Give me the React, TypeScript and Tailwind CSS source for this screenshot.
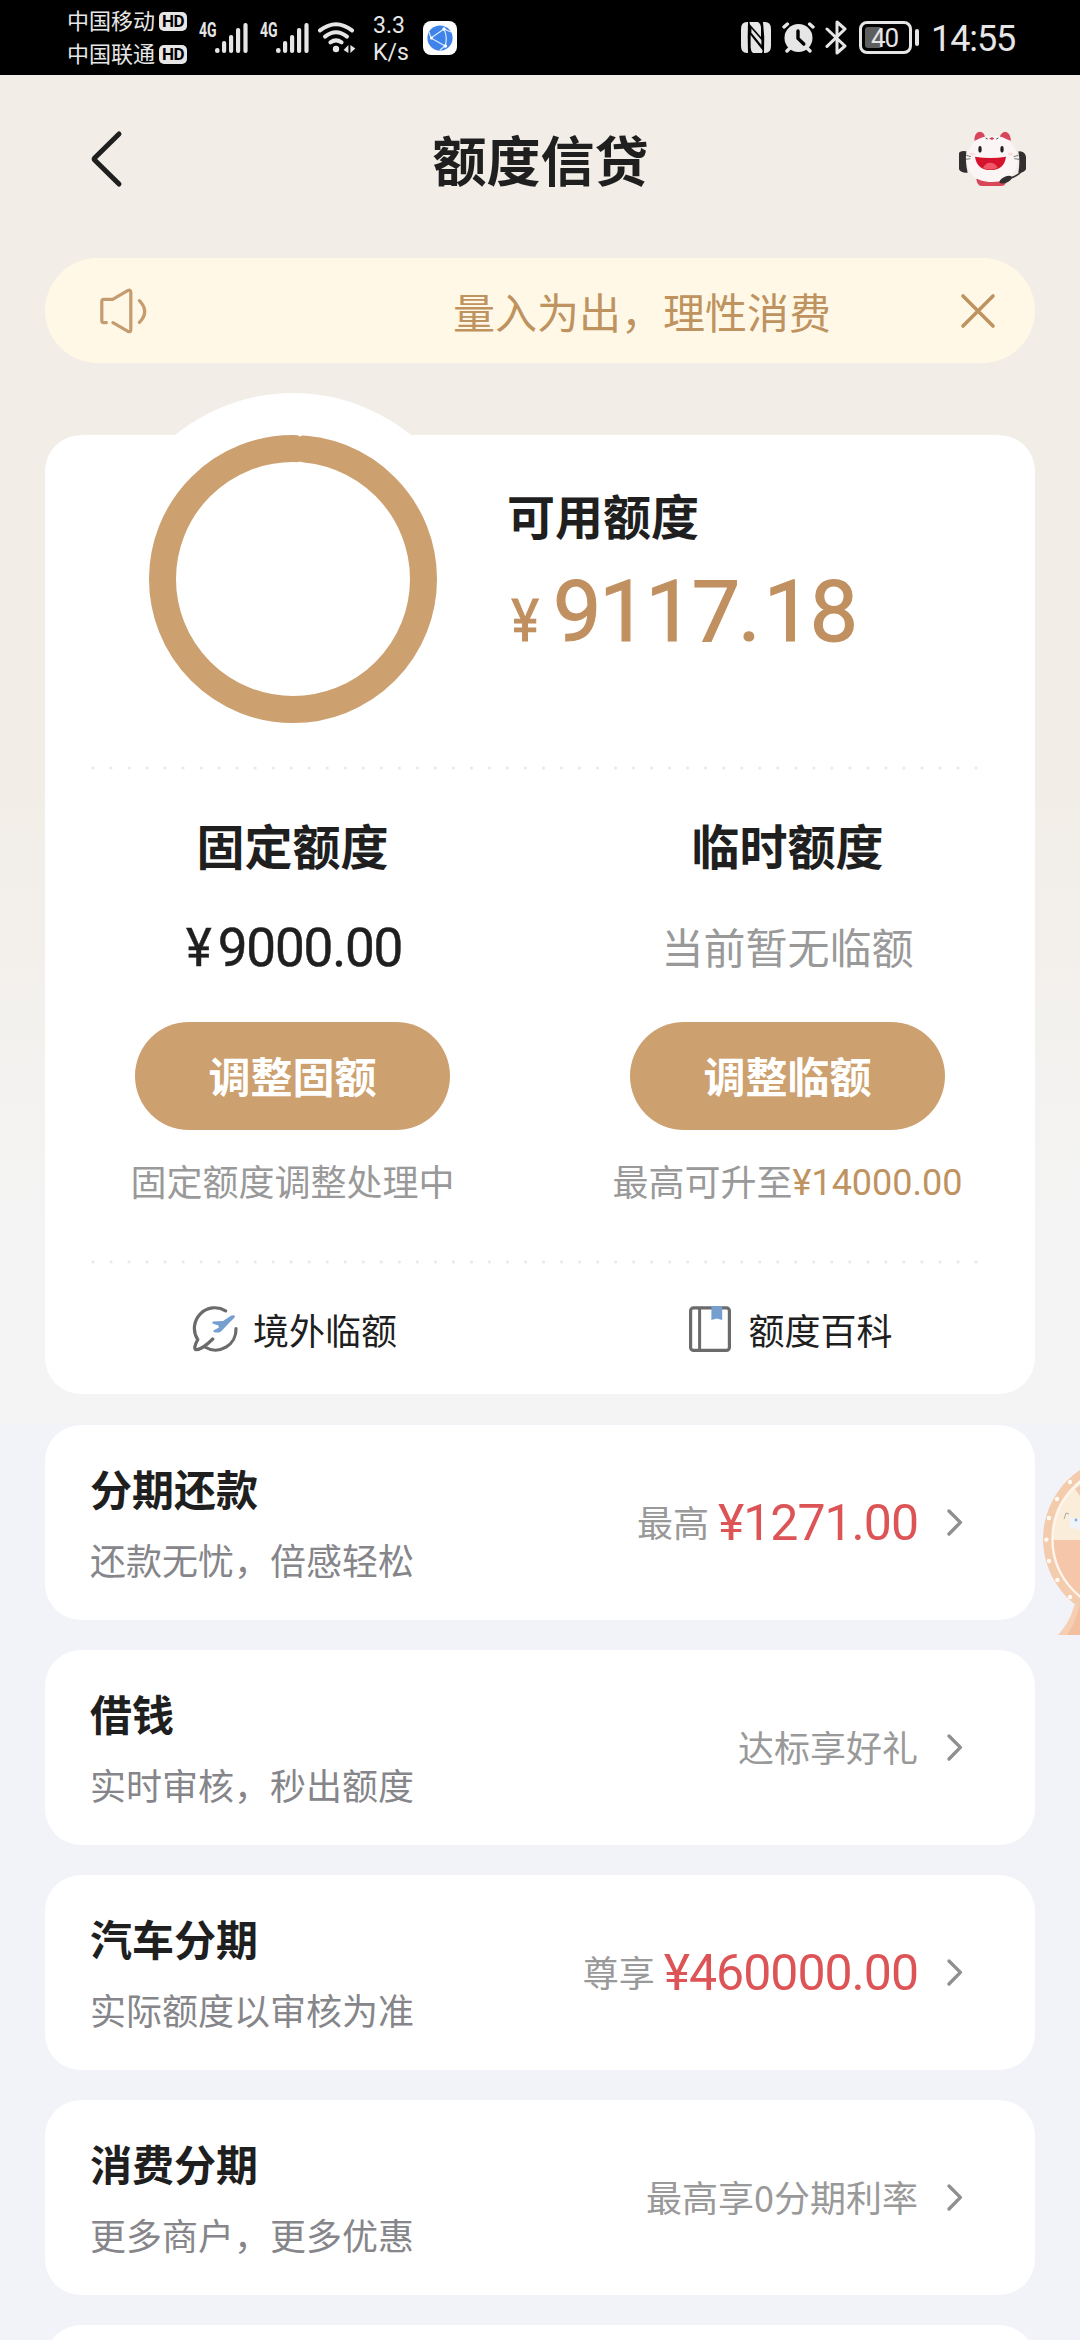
import React from 'react';
import { clsx } from 'clsx';

interface ProductItem {
    id: string;
    title: string;
    desc: string;
    hint: string;
    amount?: string;
}

const PRODUCTS: ProductItem[] = [
    { id: 'repay', title: '分期还款', desc: '还款无忧，倍感轻松', hint: '最高', amount: '¥1271.00' },
    { id: 'loan', title: '借钱', desc: '实时审核，秒出额度', hint: '达标享好礼' },
    { id: 'car', title: '汽车分期', desc: '实际额度以审核为准', hint: '尊享', amount: '¥460000.00' },
    { id: 'consume', title: '消费分期', desc: '更多商户，更多优惠', hint: '最高享0分期利率' },
];

const NUM = "font-['Roboto','Noto_Sans_CJK_SC',sans-serif]";

/* ---------- Status bar ---------- */

const HdBadge = () => (
    <span className="flex h-[19px] w-[28px] items-center justify-center rounded-[5px] bg-[#e6e6e6] font-['Roboto',sans-serif] text-[17px] leading-none font-bold tracking-[-0.5px] text-black">
        HD
    </span>
);

const Carrier = ({ name }: { name: string }) => (
    <div className="flex items-center gap-[4px]">
        <span className="w-[88px] pb-[3px] leading-[21px] whitespace-nowrap">{name}</span>
        <HdBadge />
    </div>
);

const Signal = ({ className }: { className?: string }) => (
    <div className={clsx('flex h-[30px] items-start', className)}>
        <span className="w-[16px] origin-left scale-x-[0.7] font-['Roboto',sans-serif] text-[20px] leading-[15px] font-bold">4G</span>
        <svg width="33" height="30" viewBox="0 0 33 30" fill="#e6e6e6">
            <rect x="0" y="25" width="4.6" height="5" rx="2.2" />
            <rect x="7" y="18" width="4.2" height="12" rx="2" />
            <rect x="14" y="12" width="4.2" height="18" rx="2" />
            <rect x="21" y="5" width="4.2" height="25" rx="2" />
            <rect x="28.4" y="0" width="4.2" height="30" rx="2" />
        </svg>
    </div>
);

const WifiIcon = () => (
    <svg width="38" height="31" viewBox="0 0 38 31" fill="none" stroke="#e6e6e6" strokeWidth="4" strokeLinecap="round">
        <path d="M2 8.4 Q18 -4 34 8.4" />
        <path d="M7 14.6 Q18 6 29 14.6" />
        <path d="M12.4 20.4 Q18 16.4 23.6 20.4" />
        <circle cx="18" cy="27" r="3.2" fill="#e6e6e6" stroke="none" />
        <path d="M30.4 23 V31 L25.6 28 Z M32.4 31 V23 L37.4 26.4 Z" fill="#e6e6e6" stroke="none" />
    </svg>
);

const GlobeAppIcon = () => (
    <svg width="34" height="34" viewBox="0 0 34 34">
        <rect width="34" height="34" rx="8" fill="#fdfdfd" />
        <circle cx="17" cy="17" r="12.6" fill="#3f83ea" />
        <path d="M8 17 L21 8 M8 17 L22 25 M21 8 Q25 17 22 25 M21 8 L28 11 M22 25 L17 29 M8 17 L6 11" stroke="#dcebff" strokeWidth="1.2" fill="none" />
        <g fill="#fff">
            <circle cx="8.4" cy="17" r="1.5" />
            <circle cx="21" cy="8" r="1.7" />
            <circle cx="22.4" cy="25" r="1.7" />
        </g>
    </svg>
);

const StatusBar = () => (
    <div className="flex h-[75px] items-center bg-black pr-[64px] pl-[67px] text-[#e6e6e6]">
        <div className="flex flex-col gap-[9px] font-['Noto_Sans_CJK_SC',sans-serif] text-[22px]">
            <Carrier name="中国移动" />
            <Carrier name="中国联通" />
        </div>
        <Signal className="ml-[12px]" />
        <Signal className="mr-[9px] ml-[12px]" />
        <WifiIcon />
        <div className="ml-[17px] w-[50px] pt-[3px] font-['Roboto',sans-serif] text-[23px] leading-[27px]">
            <div>3.3</div>
            <div>K/s</div>
        </div>
        <GlobeAppIcon />
        <div className="ml-auto flex items-center">
            {/* NFC */}
            <svg width="30" height="31" viewBox="0 0 30 31">
                <path d="M6 0 H7 Q6.4 15 7 31 H6 Q0 31 0 24 V7 Q0 0 6 0 Z" fill="#e6e6e6" />
                <path d="M8.4 0 H17 Q20 2 20 6 V15 L9 2.4 Z" fill="#e6e6e6" />
                <path d="M9.6 13 L21.4 28 Q22 29 21 31 H12 Q9.6 29 9.6 25 Z" fill="#e6e6e6" />
                <path d="M10.4 6.6 L20.4 18 V23 L10.4 10.8 Z" fill="#e6e6e6" />
                <path d="M22 0 H24 Q30 0 30 7 V24 Q30 31 24 31 H23 Q24 15 22 0 Z" fill="#e6e6e6" />
            </svg>
            {/* Alarm */}
            <svg className="ml-[11px]" width="33" height="31" viewBox="0 0 33 31">
                <circle cx="16.5" cy="16" r="14" fill="#e6e6e6" />
                <path d="M2 5 L5.4 2 M31 5 L27.6 2 M5 29 L8 26 M28 29 L25 26" stroke="#e6e6e6" strokeWidth="3.4" strokeLinecap="round" />
                <path d="M16 9 V16.4 L21.8 22" fill="none" stroke="#000" strokeWidth="3.4" strokeLinecap="round" />
            </svg>
            {/* Bluetooth */}
            <svg className="ml-[10px]" width="23" height="35" viewBox="0 0 23 35" fill="none" stroke="#e6e6e6" strokeWidth="3" strokeLinejoin="round" strokeLinecap="round">
                <path d="M2 9 L20 26 L12 33 V2 L20 9 L2 26.4" />
            </svg>
            <div className="ml-[11px] flex h-[33px] w-[53px] items-center rounded-[8px] border-[3px] border-[#e6e6e6] p-[3px]">
                <div className="h-[21px] w-[17px] rounded-[3px] bg-[#5e5e5e]" />
                <span className="-ml-[11px] font-['Roboto',sans-serif] text-[26px] leading-none tracking-[-1px]">40</span>
            </div>
            <div className="ml-[3px] h-[17px] w-[4px] rounded-[2px] bg-[#e6e6e6]" />
            <span className="ml-[12px] w-[85px] pt-[3px] font-['Roboto',sans-serif] text-[36px] leading-none tracking-[-1.1px] whitespace-nowrap">14:55</span>
        </div>
    </div>
);

/* ---------- Header ---------- */

const Mascot = () => (
    <svg width="70" height="56" viewBox="117 93 210 168">
        <path d="M166 122 Q166 96 182 95 Q196 96 198 112 Z M276 122 Q274 97 258 95 Q245 98 242 112 Z" fill="#d6455c" />
        <path d="M172 236 H264 Q262 258 246 258 H190 Q174 258 172 236 Z" fill="#d84658" />
        <path d="M220 108 C262 106 282 128 292 156 C302 196 290 246 220 246 C150 246 136 198 148 156 C158 124 182 108 220 108 Z" fill="#fbf6f5" />
        <path d="M120 158 Q126 151 142 154 Q138 186 146 218 Q126 220 120 208 Z" fill="#332f30" />
        <path d="M298 154 Q318 154 321 170 V208 Q314 220 298 218 Q304 186 298 154 Z" fill="#332f30" />
        <path d="M308 212 Q296 230 268 236" fill="none" stroke="#332f30" strokeWidth="5" />
        <ellipse cx="260" cy="239" rx="20" ry="9" transform="rotate(-24 260 239)" fill="#332f30" />
        <path d="M142 166 L156 170 M140 178 L154 176 M298 166 L284 170 M300 178 L286 176" stroke="#333" strokeWidth="2" />
        <ellipse cx="183" cy="148" rx="5" ry="10" fill="#222" />
        <ellipse cx="249" cy="148" rx="5" ry="10" fill="#222" />
        <path d="M168 170 Q214 178 261 170 Q256 210 214 210 Q174 210 168 170 Z" fill="#d5132c" />
        <path d="M192 204 Q200 188 214 188 Q228 188 236 203 Q214 214 192 204 Z" fill="#ef5668" />
        <path d="M200 114 L206 117 M238 114 L232 117" stroke="#444" strokeWidth="3" />
        <path d="M210 116 L219 120 L226 116 L219 111 Z" fill="#d6455c" />
        <ellipse cx="160" cy="162" rx="7" ry="4" fill="#fbd9d6" />
        <ellipse cx="274" cy="162" rx="7" ry="4" fill="#fbd9d6" />
    </svg>
);

const Header = () => (
    <div className="flex h-[183px] items-center justify-between pr-[52px] pb-[15px] pl-[89px]">
        <svg width="34" height="58" viewBox="0 0 34 58" fill="none" stroke="#1f1f1f" strokeWidth="5" strokeLinecap="round" strokeLinejoin="round">
            <path d="M30 4 L5.6 28 Q4.8 29 5.6 30 L30 54" />
        </svg>
        <h1 className="text-[54px] leading-none font-bold">额度信贷</h1>
        <Mascot />
    </div>
);

const NoticeBar = () => (
    <div className="mx-[45px] flex h-[105px] items-center rounded-full bg-[#fff8e7] pr-[38px] pl-[53px] text-[#be935f]">
        <svg width="52" height="48" viewBox="0 0 52 48" fill="none" stroke="#c59c70" strokeWidth="3.2" strokeLinecap="round" strokeLinejoin="round">
            <path d="M8.4 35.6 H5.6 Q3.8 35.6 3.8 33.8 V14.4 Q3.8 12.4 5.8 12.4 H14.7 L29.6 3.6 Q32.8 2.2 32.8 5.4 V42.4 Q32.8 45.8 29.6 44.2 L14.9 35.6" />
            <path d="M41.4 13.6 Q52 24.4 41.4 35.4" />
        </svg>
        <span className="ml-[303px] text-[42px] leading-none whitespace-nowrap">量入为出，理性消费</span>
        <svg className="ml-auto" width="38" height="38" viewBox="0 0 38 38" stroke="#be935f" strokeWidth="3.6" strokeLinecap="round">
            <path d="M4 4 L34 34 M34 4 L4 34" />
        </svg>
    </div>
);

/* ---------- Quota card ---------- */

const DottedLine = () => (
    <svg className="ml-[46px]" width="888" height="4" viewBox="0 0 888 4">
        <line x1="2" y1="2" x2="885" y2="2" stroke="#e9e9e9" strokeWidth="3.2" strokeLinecap="round" strokeDasharray="0 18.02" />
    </svg>
);

const QuotaRing = () => (
    <svg className="-mt-[42px] ml-[62px] shrink-0" width="372" height="372" viewBox="0 0 372 372">
        <circle cx="186" cy="186" r="186" fill="#fff" />
        <circle cx="186" cy="186" r="130.5" fill="none" stroke="#cca06f" strokeWidth="27" />
        <path d="M189 41 H197 L193 43.8 Z M189 70 H197 L193 68.4 Z" fill="#fff" />
    </svg>
);

const PlaneIcon = () => (
    <svg width="46" height="46" viewBox="0 0 46 46" fill="none" strokeLinecap="round" strokeLinejoin="round">
        <path d="M33.6 4.8 A20.5 20.5 0 0 0 5.8 33.6 Q0.6 43 4.4 43.6 Q10 43.6 20.8 33" stroke="#6b6b6b" strokeWidth="3.2" />
        <path d="M44 22.6 A20.5 20.5 0 0 1 12.8 41" stroke="#6b6b6b" strokeWidth="3.2" />
        <path d="M20.6 15.4 L31 15 L39 9.8 Q42.6 8.2 43 10.6 Q42.8 12 38 16 L29 25.4 Q26 27.4 21.6 26 L21.4 24.4 L27 21.4 L26.4 19.6 L20.4 17.4 Z" fill="#759fcf" />
    </svg>
);

const BookIcon = () => (
    <svg width="42" height="46" viewBox="0 0 42 46" fill="none">
        <rect x="1.6" y="1.8" width="38.8" height="42.6" rx="3" stroke="#6b6b6b" strokeWidth="3.2" />
        <path d="M10.6 2 V44" stroke="#6b6b6b" strokeWidth="3" />
        <path d="M22.4 0 H33.2 V14 L27.8 12.6 L22.4 14 Z" fill="#759fcf" />
    </svg>
);

interface QuotaColumnProps {
    title: string;
    action: string;
    value: React.ReactNode;
    footer: React.ReactNode;
}

const QuotaColumn = ({ title, action, value, footer }: QuotaColumnProps) => (
    <div className="flex w-1/2 flex-col items-center">
        <h3 className="mt-[49px] text-[48px] leading-[50px] font-bold">{title}</h3>
        <div className="mt-[47px] flex h-[60px] items-center">{value}</div>
        <button className="mt-[46px] h-[108px] w-[315px] rounded-full bg-[#cca06f] pb-[2px] text-[42px] leading-none font-bold text-white">
            {action}
        </button>
        <div className="mt-[30px] flex h-[40px] items-center text-[36px] leading-none whitespace-nowrap text-[#999]">{footer}</div>
    </div>
);

const QuotaCard = () => (
    <section className="mx-[45px] mt-[72px] h-[959px] rounded-[36px] bg-white">
        <div className="flex h-[331px]">
            <QuotaRing />
            <div className="ml-[28px] flex flex-col">
                <h2 className="mt-[54px] text-[48px] leading-[50px] font-bold">可用额度</h2>
                {/* stroke gives the amount a weight between regular and medium */}
                <div className={clsx(NUM, 'mt-[29px] flex items-baseline text-[#c09060] [-webkit-text-stroke:1.2px_#c09060]')}>
                    <span className="w-[46px] origin-left scale-x-[0.88] pl-[5px] text-[59px] leading-none">¥</span>
                    <span className="text-[86px] leading-[87px] tracking-[-2.1px]">
                        9117<span className="tracking-[3px]">.</span>18
                    </span>
                </div>
            </div>
        </div>
        <DottedLine />
        <div className="flex h-[490px]">
            <QuotaColumn
                title="固定额度"
                action="调整固额"
                value={
                    <span className={clsx(NUM, 'flex pt-[4px] pl-[3px] text-[53px] leading-none [-webkit-text-stroke:0.5px_#1f1f1f]')}>
                        <span className="mr-[4px] origin-left scale-x-[0.92]">¥</span>
                        <span className="tracking-[-1.2px]">9000.00</span>
                    </span>
                }
                footer="固定额度调整处理中"
            />
            <QuotaColumn
                title="临时额度"
                action="调整临额"
                value={<span className="pb-[1px] text-[42px] leading-none text-[#999]">当前暂无临额</span>}
                footer={<>最高可升至<span className={clsx(NUM, 'pt-[5px] text-[#be935f]')}>¥14000.00</span></>}
            />
        </div>
        <DottedLine />
        <div className="flex h-[130px] text-[36px] leading-none">
            <div className="flex w-1/2 items-center justify-center gap-[15px] pl-[4px]">
                <PlaneIcon />
                <span>境外临额</span>
            </div>
            <div className="flex w-1/2 items-center justify-center gap-[17px] pl-[7px]">
                <BookIcon />
                <span>额度百科</span>
            </div>
        </div>
    </section>
);

/* ---------- Product list ---------- */

const ProductCard = ({ item }: { item: ProductItem }) => (
    <div className="flex h-[195px] items-center justify-between rounded-[36px] bg-white pr-[67px] pl-[45px]">
        <div className="flex flex-col gap-[30px]">
            <h3 className="text-[42px] leading-[42px] font-bold">{item.title}</h3>
            <p className="text-[36px] leading-[40px] text-[#85858a]">{item.desc}</p>
        </div>
        <div className="flex items-center">
            <span className="pb-[4px] text-[36px] leading-none text-[#999]">{item.hint}</span>
            {item.amount && (
                <span className={clsx(NUM, 'ml-[9px] text-[50px] leading-none tracking-[-1px] text-[#dc5456]')}>{item.amount}</span>
            )}
            <svg className="ml-[26px]" width="24" height="32" viewBox="0 0 24 32" fill="none" stroke="#8f8f8f" strokeWidth="3.4" strokeLinecap="round" strokeLinejoin="round">
                <path d="M5 4 L16.4 15.4 L5 27" />
            </svg>
        </div>
    </div>
);

/* Lucky wheel peeking out from the right edge */
const LuckyWheel = () => (
    <svg className="absolute top-[1455px] right-0" width="40" height="185" viewBox="1040 1455 40 185">
        <path d="M1074 1606 Q1070 1622 1058 1635 H1080 V1600 Z" fill="#f6cfb2" />
        <path d="M1080 1604 Q1076 1622 1067 1635 H1080 Z" fill="#f3bf9e" />
        <circle cx="1126" cy="1539" r="83" fill="#f3ccae" />
        <circle cx="1126" cy="1539" r="73.5" fill="#faedda" stroke="#fff5ec" strokeWidth="2.4" />
        <path d="M1053.6 1540 A72.4 72.4 0 0 0 1080 1595 V1540 Z" fill="#f6c6ab" />
        <path d="M1075 1489 L1080 1485 V1496 Z" fill="#f3c9b0" />
        <path d="M1070 1517 L1080 1519 V1530 L1070 1527 Z" fill="#eef4fa" />
        <path d="M1066 1513 L1064 1519 M1066 1513 L1069 1514" stroke="#a9a9a9" fill="none" />
        <circle cx="1076" cy="1520" r="1.4" fill="#7fb0dd" />
        <g fill="#fffaf3">
            <circle cx="1070" cy="1482" r="2.2" />
            <circle cx="1057" cy="1499" r="2.2" />
            <circle cx="1049" cy="1518" r="2.2" />
            <circle cx="1046.4" cy="1539.6" r="2.2" />
            <circle cx="1049" cy="1561" r="2.2" />
            <circle cx="1057.4" cy="1580" r="2.2" />
            <circle cx="1070" cy="1597" r="2.2" />
        </g>
    </svg>
);

export default function App() {
    return (
        <div className="relative h-[2340px] w-[1080px] overflow-hidden bg-[#f2f3f8] font-['Noto_Sans_CJK_SC',sans-serif] text-[#1f1f1f]">
            <StatusBar />
            <div className="h-[1349px] bg-linear-to-b from-[#f2ede6] from-50% to-[#f4f4f4] to-85%">
                <Header />
                <NoticeBar />
                <QuotaCard />
            </div>
            <div className="mx-[45px] mt-[1px] flex flex-col gap-[30px]">
                {PRODUCTS.map(item => (
                    <ProductCard key={item.id} item={item} />
                ))}
                <div className="h-[195px] rounded-[36px] bg-white" />
            </div>
            <LuckyWheel />
        </div>
    );
}
